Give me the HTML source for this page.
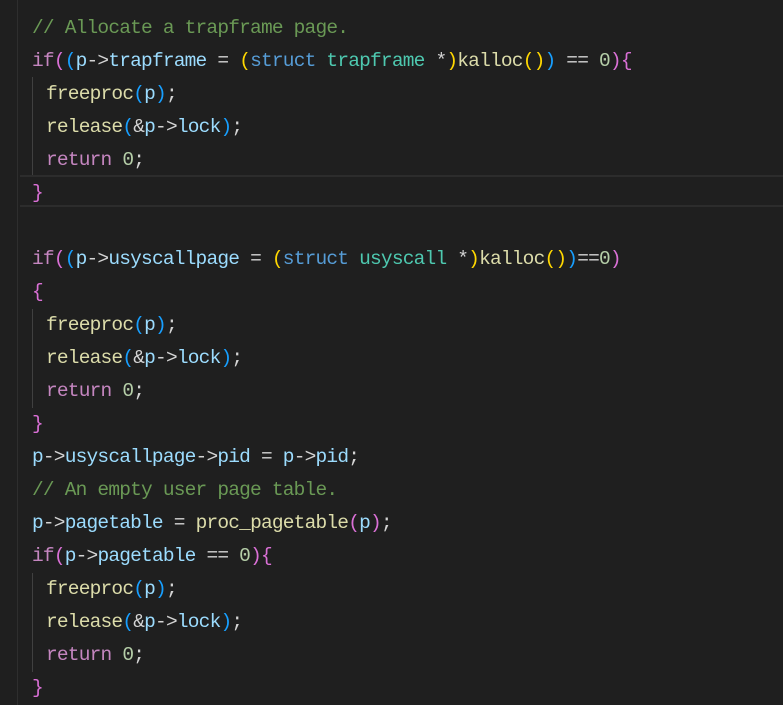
<!DOCTYPE html>
<html><head><meta charset="utf-8"><style>
body{margin:0;background:#1f1f1f;width:783px;height:705px;overflow:hidden;position:relative}
.code{position:absolute;left:32px;top:12px;font-family:"Liberation Mono",monospace;font-size:19.5px;line-height:33px;white-space:pre;color:#d4d4d4;letter-spacing:-0.8px}
.c{color:#6a9955}.k{color:#c586c0}.v{color:#9cdcfe}.f{color:#dcdcaa}.s{color:#569cd6}.t{color:#4ec9b0}.n{color:#b5cea8}
.b1{color:#da70d6}.b2{color:#179fff}.b3{color:#ffd700}
.i{display:inline-block;width:14px}
.g{position:absolute;background:#404040;width:1px}
.hl{position:absolute;left:20px;right:0;height:2px;background:#2c2c2c}
</style></head><body>
<div class="g" style="left:17px;top:0;height:705px;background:#2e2e2e"></div>
<div class="hl" style="top:175px"></div>
<div class="hl" style="top:205px"></div>
<div class="g" style="left:32px;top:77px;height:98px"></div>
<div class="g" style="left:32px;top:309px;height:99px"></div>
<div class="g" style="left:32px;top:573px;height:99px"></div>
<div class="code"><span class="c">// Allocate a trapframe page.</span>
<span class="k">if</span><span class="b1">(</span><span class="b2">(</span><span class="v">p</span>-&gt;<span class="v">trapframe</span> = <span class="b3">(</span><span class="s">struct</span> <span class="t">trapframe</span> *<span class="b3">)</span><span class="f">kalloc</span><span class="b3">()</span><span class="b2">)</span> == <span class="n">0</span><span class="b1">){</span>
<span class="i"></span><span class="f">freeproc</span><span class="b2">(</span><span class="v">p</span><span class="b2">)</span>;
<span class="i"></span><span class="f">release</span><span class="b2">(</span>&amp;<span class="v">p</span>-&gt;<span class="v">lock</span><span class="b2">)</span>;
<span class="i"></span><span class="k">return</span> <span class="n">0</span>;
<span class="b1">}</span>

<span class="k">if</span><span class="b1">(</span><span class="b2">(</span><span class="v">p</span>-&gt;<span class="v">usyscallpage</span> = <span class="b3">(</span><span class="s">struct</span> <span class="t">usyscall</span> *<span class="b3">)</span><span class="f">kalloc</span><span class="b3">()</span><span class="b2">)</span>==<span class="n">0</span><span class="b1">)</span>
<span class="b1">{</span>
<span class="i"></span><span class="f">freeproc</span><span class="b2">(</span><span class="v">p</span><span class="b2">)</span>;
<span class="i"></span><span class="f">release</span><span class="b2">(</span>&amp;<span class="v">p</span>-&gt;<span class="v">lock</span><span class="b2">)</span>;
<span class="i"></span><span class="k">return</span> <span class="n">0</span>;
<span class="b1">}</span>
<span class="v">p</span>-&gt;<span class="v">usyscallpage</span>-&gt;<span class="v">pid</span> = <span class="v">p</span>-&gt;<span class="v">pid</span>;
<span class="c">// An empty user page table.</span>
<span class="v">p</span>-&gt;<span class="v">pagetable</span> = <span class="f">proc_pagetable</span><span class="b1">(</span><span class="v">p</span><span class="b1">)</span>;
<span class="k">if</span><span class="b1">(</span><span class="v">p</span>-&gt;<span class="v">pagetable</span> == <span class="n">0</span><span class="b1">){</span>
<span class="i"></span><span class="f">freeproc</span><span class="b2">(</span><span class="v">p</span><span class="b2">)</span>;
<span class="i"></span><span class="f">release</span><span class="b2">(</span>&amp;<span class="v">p</span>-&gt;<span class="v">lock</span><span class="b2">)</span>;
<span class="i"></span><span class="k">return</span> <span class="n">0</span>;
<span class="b1">}</span></div>
</body></html>
